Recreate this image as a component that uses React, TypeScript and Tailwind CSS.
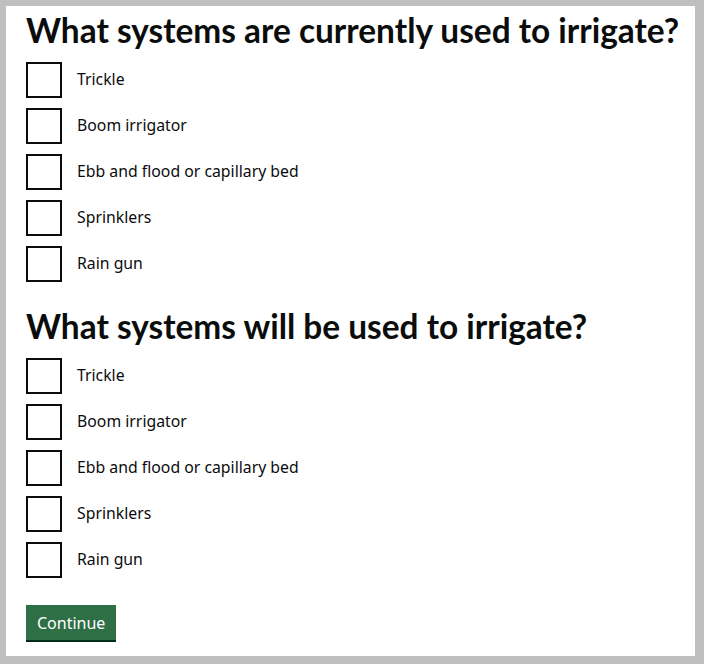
const current = ["Trickle", "Boom irrigator", "Ebb and flood or capillary bed", "Sprinklers", "Rain gun"]

function Group({ title, items }: { title: string; items: string[] }) {
  return (
    <fieldset>
      <h2
        className="text-[33.4px] leading-[40px] font-bold text-[#0b0c0c] mb-[12px] whitespace-nowrap"
        style={{ fontFamily: 'Lato, "Noto Sans", Arial, sans-serif' }}
      >
        {title}
      </h2>
      <div className="flex flex-col gap-[10px]">
        {items.map((item) => (
          <label key={item} className="flex items-center gap-[15px]">
            <span className="w-[36px] h-[36px] border-2 border-[#0b0c0c] bg-white shrink-0" />
            <span className="text-[15.8px] text-[#0b0c0c]">{item}</span>
          </label>
        ))}
      </div>
    </fieldset>
  )
}

export default function App() {
  return (
    <div className="w-[704px] h-[664px] bg-[#bfbfbf] pt-[6px] pl-[6px]" style={{ fontFamily: '"Noto Sans", Arial, sans-serif' }}>
      <div className="w-[689px] h-[650px] bg-white px-[20px] pt-[4px] flex flex-col">
        <Group title="What systems are currently used to irrigate?" items={current} />
        <div className="h-[24px]" />
        <Group title="What systems will be used to irrigate?" items={current} />
        <div className="mt-[27px]">
          <button className="bg-[#2e6f45] text-white text-[16px] px-[11px] h-[35px] shadow-[0_2px_0_#002d18]">Continue</button>
        </div>
      </div>
    </div>
  )
}
